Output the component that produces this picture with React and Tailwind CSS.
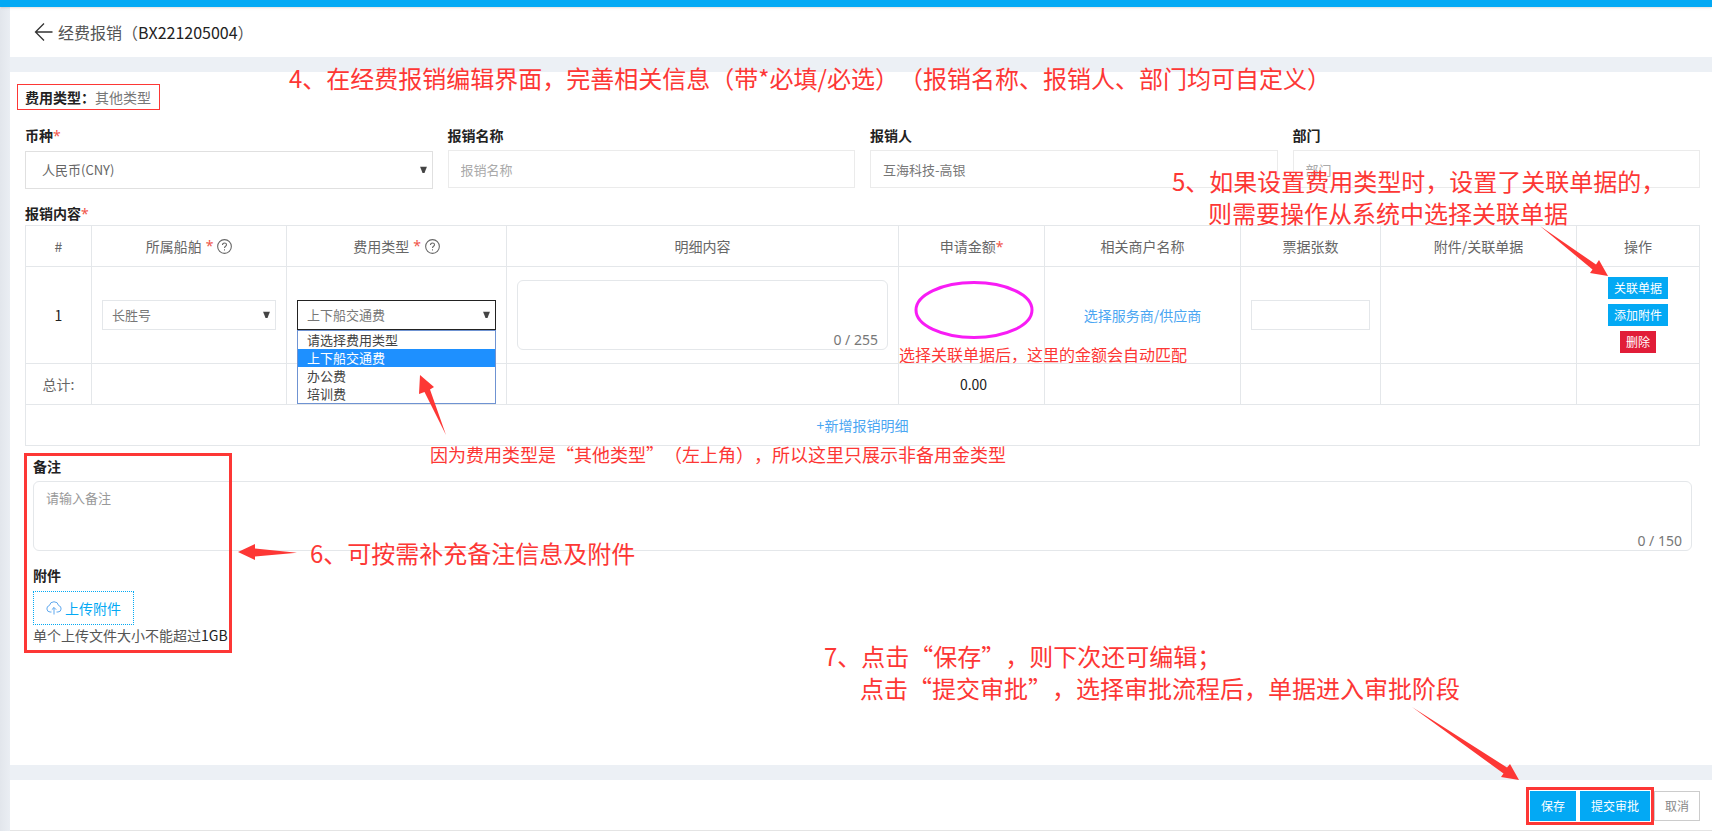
import React, { useState } from 'react';

const CURRENCIES = ['人民币(CNY)', '美元(USD)'];
const SHIPS = ['长胜号'];
const COST_TYPES = ['请选择费用类型', '上下船交通费', '办公费', '培训费'];

const Required = () => <span className="font-['Noto_Sans',sans-serif] font-normal text-[#f0564a]">*</span>;

const Caret = () => (
  <svg viewBox="0 0 7 7" className="pointer-events-none absolute right-[6px] top-1/2 h-[7px] w-[7px] -translate-y-1/2" fill="#444">
    <path d="M0 0h7L4.500 6.500h-2z" />
  </svg>
);

const HelpIcon = () => (
  <svg viewBox="0 0 14 14" className="h-[15px] w-[15px]" fill="none" stroke="#666" strokeWidth="1">
    <circle cx="7" cy="7" r="6.4" />
    <path d="M5.1 5.6c0-1.2.8-1.9 1.9-1.9s1.9.7 1.9 1.7c0 1.3-1.9 1.5-1.9 2.9" />
    <path d="M7 9.6v1.1" />
  </svg>
);

const Field = ({ id, label, required, children }) => (
  <div className="min-w-0">
    <label htmlFor={id} className="mb-[5px] block text-sm font-bold leading-5 text-[#222]">
      {label}
      {required && <Required />}
    </label>
    {children}
  </div>
);

const Counter = ({ max, used }) => (
  <span className="pointer-events-none absolute bottom-0 right-[10px] font-['Noto_Sans',sans-serif] text-sm leading-5 text-[#777]">
    {used} / {max}
  </span>
);

const TextArea = ({ max, ...rest }) => {
  const [value, setValue] = useState('');
  return (
    <div className="relative">
      <textarea
        {...rest}
        maxLength={max}
        value={value}
        onChange={(e) => setValue(e.target.value)}
        className="block h-[70px] w-full resize-none rounded-md border border-[#e4e7ea] bg-transparent px-3 py-[6px] text-[13px] leading-5 text-[#666] outline-none placeholder:text-[#999]"
      />
      <Counter max={max} used={value.length} />
    </div>
  );
};

const inputClass =
  'block h-[38px] w-full border border-[#ebebeb] bg-white px-3 text-[13px] text-[#777] outline-none placeholder:text-[#aaa]';

const SmallButton = ({ danger, children }) => (
  <button
    type="button"
    className={`h-[22px] px-[6px] text-xs leading-[22px] text-white ${danger ? 'bg-[#e11d38]' : 'bg-[#03a9f4]'}`}
  >
    {children}
  </button>
);

const ExpenseTable = () => {
  const [costType, setCostType] = useState(COST_TYPES[1]);

  return (
    <table className="w-full table-fixed border-collapse text-center text-sm leading-[18px] text-[#666] [&_td]:border [&_td]:border-[#e4e7ea] [&_th]:border [&_th]:border-[#e4e7ea] [&_th]:font-normal">
      <colgroup>
        <col className="w-[66px]" />
        <col className="w-[195px]" />
        <col className="w-[220px]" />
        <col />
        <col className="w-[146px]" />
        <col className="w-[196px]" />
        <col className="w-[140px]" />
        <col className="w-[196px]" />
        <col className="w-[123px]" />
      </colgroup>
      <thead>
        <tr className="h-[41px]">
          <th>#</th>
          <th>
            <span className="inline-flex items-center gap-1">所属船舶 <Required /> <HelpIcon /></span>
          </th>
          <th>
            <span className="inline-flex items-center gap-1">费用类型 <Required /> <HelpIcon /></span>
          </th>
          <th>明细内容</th>
          <th>申请金额<Required /></th>
          <th>相关商户名称</th>
          <th>票据张数</th>
          <th>附件/关联单据</th>
          <th>操作</th>
        </tr>
      </thead>
      <tbody>
        <tr className="h-[97px]">
          <td className="text-[#222]">1</td>
          <td className="px-[10px]">
            <div className="relative">
              <select aria-label="所属船舶" className="block h-[30px] w-full appearance-none border border-[#e4e7ea] bg-white px-[9px] text-[13px] text-[#777] outline-none">
                {SHIPS.map((s) => <option key={s}>{s}</option>)}
              </select>
              <Caret />
            </div>
          </td>
          <td className="px-[10px]">
            <div className="relative">
              <select
                aria-label="费用类型"
                value={costType}
                onChange={(e) => setCostType(e.target.value)}
                className="block h-[30px] w-full appearance-none border border-[#222] bg-white px-[9px] text-[13px] text-[#777] outline-none"
              >
                {COST_TYPES.map((t) => <option key={t}>{t}</option>)}
              </select>
              <Caret />
              <ul role="listbox" className="absolute left-0 right-0 top-full z-10 border border-[#6f93d2] bg-white text-left text-[13px] leading-[18px] text-[#444]">
                {COST_TYPES.map((t) => (
                  <li
                    key={t}
                    role="option"
                    aria-selected={t === costType}
                    onClick={() => setCostType(t)}
                    className={`px-[9px] ${t === costType ? 'bg-[#1e90ff] text-white' : ''}`}
                  >
                    {t}
                  </li>
                ))}
              </ul>
            </div>
          </td>
          <td className="px-[10px]"><TextArea max={255} aria-label="明细内容" /></td>
          <td className="pl-1">
            <svg viewBox="0 0 120 60" className="mx-auto -mt-2 h-[60px] w-[120px]" fill="none" stroke="#f81cf5" strokeWidth="3">
              <ellipse cx="60" cy="29" rx="58" ry="27.5" />
            </svg>
          </td>
          <td><a href="#merchant" className="text-[#4ba6f2]">选择服务商/供应商</a></td>
          <td className="px-[10px]">
            <input aria-label="票据张数" className="block h-[30px] w-full border border-[#e4e7ea] px-2 text-[13px] outline-none" />
          </td>
          <td></td>
          <td>
            <div className="flex flex-col items-center gap-[5px]">
              <SmallButton>关联单据</SmallButton>
              <SmallButton>添加附件</SmallButton>
              <SmallButton danger>删除</SmallButton>
            </div>
          </td>
        </tr>
        <tr className="h-[41px]">
          <td>总计:</td>
          <td></td>
          <td></td>
          <td></td>
          <td className="pl-1 text-[#222]">0.00</td>
          <td></td>
          <td></td>
          <td></td>
          <td></td>
        </tr>
        <tr className="h-[41px]">
          <td colSpan={9}>
            <button type="button" className="text-[#4ba6f2]">+新增报销明细</button>
          </td>
        </tr>
      </tbody>
    </table>
  );
};

// Tutorial notes that float over the form
const Notes = () => (
  <div className="pointer-events-none absolute inset-0 z-20 text-2xl leading-8 whitespace-nowrap text-[#fd3735]">
    <p className="absolute left-[289px] top-[62px]">4、在经费报销编辑界面，完善相关信息（带*必填/必选）（报销名称、报销人、部门均可自定义）</p>
    <div className="absolute left-[1172px] top-[165px]">
      <p>5、如果设置费用类型时，设置了关联单据的，</p>
      <p className="pl-9">则需要操作从系统中选择关联单据</p>
    </div>
    <p className="absolute left-[899px] top-[342px] text-base leading-6">选择关联单据后，这里的金额会自动匹配</p>
    <p className="absolute left-[430px] top-[442px] text-lg leading-6">因为费用类型是“其他类型”（左上角），所以这里只展示非备用金类型</p>
    <p className="absolute left-[310px] top-[537px]">6、可按需补充备注信息及附件</p>
    <div className="absolute left-[824px] top-[640px]">
      <p>7、点击“保存”，则下次还可编辑；</p>
      <p className="pl-9">点击“提交审批”，选择审批流程后，单据进入审批阶段</p>
    </div>
    <div className="absolute left-[24px] top-[453px] h-[200px] w-[208px] border-3 border-[#fd3735]"></div>
    <svg className="absolute inset-0 h-full w-full" fill="#fd3735">
      <path d="M446 435L424.500 392L419 394L420 375L434 387L430 389.500Z" />
      <path d="M1540 226L1596 264.500L1599 260L1608 276L1590 273L1592.500 269.500Z" />
      <path d="M297 552.700L255 556.500V560L238 552L255 544V548.500Z" />
      <path d="M1412 707L1507 767.500L1510 764L1519 780L1501 777L1503.500 773.500Z" />
    </svg>
  </div>
);

const App = () => {
  return (
    <div className="relative flex min-h-screen flex-col bg-[#ecf0f5] font-['Noto_Sans_CJK_SC',sans-serif] [text-spacing-trim:space-all]" lang="zh-CN">
      <div className="z-10 h-[7px] bg-[#03a9f4] shadow-sm"></div>

      <div className="flex flex-1">
        <div className="w-[10px] bg-linear-to-r from-[#e2e6ec] to-[#eaeef3]"></div>

        <div className="flex min-w-0 flex-1 flex-col">
          <header className="flex h-[50px] items-center gap-1 bg-white pl-6 text-base text-[#555]">
            <button type="button" aria-label="返回">
              <svg viewBox="0 0 20 20" className="h-5 w-5" fill="none" stroke="#333" strokeWidth="1.300">
                <path d="M18.500 10H1.500M10 1.500L1.500 10L10 18.500" />
              </svg>
            </button>
            <h1>经费报销（<span className="text-[#222]">BX221205004</span>）</h1>
          </header>

          <main className="mt-[15px] flex-1 bg-white pl-[15px] pr-3 pt-3">
            <p className="-ml-2 inline-block border border-[#fd3735] pl-[7px] pr-2 text-sm leading-6 text-[#777]">
              <b className="text-[#222]">费用类型：</b>其他类型
            </p>

            <div className="mt-[15px] grid grid-cols-4 gap-[15px]">
              <Field id="currency" label="币种" required>
                <div className="relative">
                  <select id="currency" className="block h-[38px] w-full appearance-none border border-[#e0e0e0] bg-white px-4 text-[13px] text-[#666] outline-none">
                    {CURRENCIES.map((c) => <option key={c}>{c}</option>)}
                  </select>
                  <Caret />
                </div>
              </Field>
              <Field id="name" label="报销名称">
                <input id="name" placeholder="报销名称" className={inputClass} />
              </Field>
              <Field id="person" label="报销人">
                <input id="person" defaultValue="互海科技-高银" className={inputClass} />
              </Field>
              <Field id="dept" label="部门">
                <input id="dept" placeholder="部门" className={inputClass} />
              </Field>
            </div>

            <h2 className="mb-px mt-[14px] text-sm font-bold leading-5 text-[#222]">
              报销内容<Required />
            </h2>
            <ExpenseTable />

            <section className="px-2 pt-[10px] text-sm text-[#555]">
              <label htmlFor="remark" className="mb-[5px] block font-bold leading-5 text-[#222]">备注</label>
              <TextArea id="remark" max={150} placeholder="请输入备注" />
              <h3 className="mt-[14px] font-bold leading-5 text-[#222]">附件</h3>
              <button type="button" className="mt-[6px] flex h-[34px] items-center gap-[3px] border border-dotted border-[#03a9f4] px-3 text-[#03a9f4]">
                <svg viewBox="0 0 16 14" className="h-[14px] w-4" fill="none" stroke="#5fa8ee" strokeWidth="1">
                  <path d="M5.500 11H4a3.300 3.300 0 0 1-.6-6.500 4.700 4.700 0 0 1 9.200 0A3.300 3.300 0 0 1 12 11h-1.500M8 13.500V6.500M5.800 8.700L8 6.500l2.200 2.200" />
                </svg>
                上传附件
              </button>
              <p className="leading-5">单个上传文件大小不能超过<span className="text-[#222]">1GB</span></p>
            </section>
          </main>

          <footer className="mt-[15px] flex h-[51px] items-center justify-end border-b border-[#e4e4e4] bg-white pr-3 pt-px text-xs">
            <div className="flex gap-1 border-3 border-[#fd3735] p-px">
              <button type="button" className="h-[30px] bg-[#03a9f4] px-[11px] text-white">保存</button>
              <button type="button" className="h-[30px] bg-[#03a9f4] px-[11px] text-white">提交审批</button>
            </div>
            <button type="button" className="h-[30px] border border-[#ccc] px-[10px] text-[#888]">取消</button>
          </footer>
        </div>
      </div>

      <Notes />
    </div>
  );
};

export default App;
